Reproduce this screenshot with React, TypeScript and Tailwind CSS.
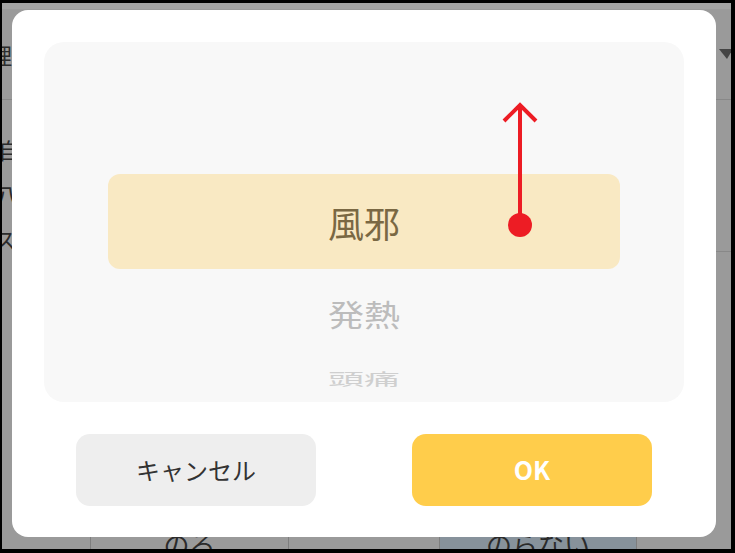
const jp = "font-['Noto_Sans_CJK_JP','Noto_Sans',sans-serif]";

function BackgroundPage() {
  return (
    <div className={`relative flex h-full w-full flex-col overflow-hidden bg-[#9a9a9a] text-[#2b2b2b] ${jp}`}>
      {/* top strip */}
      <div className="h-[6px] bg-[#a3a3a3]" />

      {/* header row */}
      <div className="flex h-[91px] items-center justify-between border-b border-[#888]">
        <span className="-ml-[12px] text-[22px] leading-none">理由</span>
        <svg width="14" height="10" viewBox="0 0 14 10" className="mr-[-2px]">
          <path d="M0 0 H14 L8 10 Z" fill="#444" />
        </svg>
      </div>

      {/* list rows */}
      <div className="flex flex-col pt-[26px] text-[22px] leading-none">
        <div className="flex h-[45px] items-center">
          <span className="-ml-[4px]">自分で</span>
        </div>
        <div className="flex h-[45px] items-center">
          <span className="-ml-[6px]">八月に</span>
        </div>
        <div className="flex h-[35px] items-end pb-[2px]">
          <span className="-ml-[8px]">スーパー</span>
        </div>
        <div className="ml-[700px] h-px bg-[#888]" />
      </div>

      {/* answer buttons */}
      <div className="mt-auto flex h-[30px] items-start pl-[88px] text-[26px] leading-none">
        <div className="flex h-[40px] w-[199px] items-center justify-center border-x border-[#7e7e7e] pt-[10px]">
          のる
        </div>
        <div className="w-[150px]" />
        <div className="flex h-[40px] w-[198px] items-center justify-center border-x border-[#7e7e7e] bg-[#87929b] pt-[10px]">
          のらない
        </div>
      </div>
    </div>
  );
}

function Picker() {
  return (
    <div className={`flex h-[360px] shrink-0 flex-col items-stretch overflow-hidden rounded-[20px] bg-[#f8f8f8] pt-[132px] ${jp}`}>
      <div className="mx-16 flex h-[95px] items-center justify-center rounded-xl bg-[#f9e9c3] text-[36px] text-[#7a6843]">
        風邪
      </div>
      <div className="flex h-[86px] items-center justify-center pt-[2px] text-[36px] text-[#bcbcbc]">
        <span className="scale-y-[0.82]">発熱</span>
      </div>
      <div className="flex h-[46px] items-center justify-center text-[36px] leading-none text-[#cfcfcf]">
        <span className="scale-y-[0.45]">頭痛</span>
      </div>
    </div>
  );
}

export default function App() {
  return (
    <div className="relative h-[553px] w-[735px] overflow-hidden border-t-[3px] border-b-4 border-l-2 border-r-4 border-black bg-black">
      <BackgroundPage />

      {/* dialog */}
      <div className="absolute left-[10px] top-[7px] flex h-[527px] w-[704px] flex-col gap-8 rounded-2xl bg-white p-8">
        <Picker />
        <div className={`flex h-[72px] shrink-0 justify-between px-8 ${jp}`}>
          <button className="flex w-[240px] items-center justify-center rounded-[14px] bg-[#eeeeee] text-[24px] text-[#333]">
            キャンセル
          </button>
          <button className="flex w-[240px] items-center justify-center rounded-[14px] bg-[#ffcd4b] text-[25px] font-bold text-white">
            OK
          </button>
        </div>
      </div>

      {/* swipe gesture hint */}
      <svg className="pointer-events-none absolute left-[-2px] top-[-3px]" width="735" height="553" viewBox="0 0 735 553">
        <path d="M520 107 V225" stroke="#ed1c24" strokeWidth="4" fill="none" />
        <path d="M504 121 L520 105 L536 121" stroke="#ed1c24" strokeWidth="4" fill="none" />
        <circle cx="520" cy="225" r="12" fill="#ed1c24" />
      </svg>
    </div>
  );
}
